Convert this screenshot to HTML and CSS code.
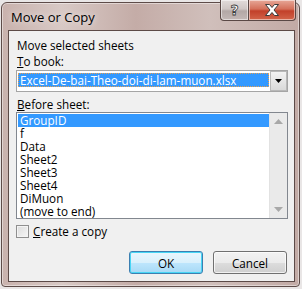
FILE: index.html
```html
<!DOCTYPE html>
<html>
<head>
<meta charset="utf-8">
<link rel="stylesheet" href="styles.css">
</head>
<body>
<div class="window">
  <div class="titlebar">
    <span class="title">Move or Copy</span>
    <div class="caption-buttons">
      <div class="cbtn help"><span class="qmark">?</span></div>
      <div class="cbtn close">
        <svg width="20" height="14" viewBox="0 0 20 14"><path d="M3.5 1.5h4l2.5 3 2.5-3h4l-4.5 5.5 4.5 5.5h-4l-2.5-3-2.5 3h-4l4.5-5.5z" fill="#fff" stroke="#3a3a3a" stroke-width="1" stroke-linejoin="round"/></svg>
      </div>
    </div>
  </div>
  <div class="client">
    <div class="label">Move selected sheets</div>
    <div class="label"><u>T</u>o book:</div>
    <div class="combo">
      <div class="combo-value"><span class="focus">Excel-De-bai-Theo-doi-di-lam-muon.xlsx</span></div>
      <div class="combo-btn"><svg width="7" height="4" viewBox="0 0 7 4"><path d="M0 0h7L3.5 4z" fill="#000"/></svg></div>
    </div>
    <div class="label label-gap"><u>B</u>efore sheet:</div>
    <div class="listbox">
      <div class="items">
        <div class="item selected">GroupID</div>
        <div class="item">f</div>
        <div class="item">Data</div>
        <div class="item">Sheet2</div>
        <div class="item">Sheet3</div>
        <div class="item">Sheet4</div>
        <div class="item">DiMuon</div>
        <div class="item">(move to end)</div>
      </div>
      <div class="scrollbar">
        <svg width="9" height="5" viewBox="0 0 9 5"><path d="M4.5 0L9 5H0z" fill="#a8a8a8"/></svg>
        <svg width="9" height="5" viewBox="0 0 9 5"><path d="M0 0h9L4.5 5z" fill="#a8a8a8"/></svg>
      </div>
    </div>
    <div class="check-row">
      <span class="checkbox"></span>
      <span class="check-label"><u>C</u>reate a copy</span>
    </div>
    <div class="buttons">
      <div class="btn default">OK</div>
      <div class="btn">Cancel</div>
    </div>
  </div>
</div>
</body>
</html>
```
FILE: styles.css
```css
html, body {
  margin: 0;
  padding: 0;
}
body {
  width: 302px;
  height: 289px;
  background: #e9e6e6;
  font-family: "Open Sans", "Noto Sans", sans-serif;
  font-size: 11.7px;
  color: #000;
  overflow: hidden;
  position: relative;
}
.window {
  position: absolute;
  left: 1px;
  top: 2px;
  width: 297px;
  height: 283px;
  border: 1px solid #5e4c49;
  border-radius: 6px 6px 4px 4px;
  background: linear-gradient(90deg, #c9b2ad 0%, #d8c9c5 20%, #c4aca7 45%, #d0bfbb 70%, #c2aaa5 100%);
  display: flex;
  flex-direction: column;
  box-shadow: inset 0 0 0 1px rgba(255,255,255,0.45);
}
.titlebar {
  height: 27px;
  display: flex;
  align-items: flex-start;
  justify-content: space-between;
  position: relative;
}
.title {
  font-family: "Open Sans", "Noto Sans", sans-serif;
  font-size: 13px;
  margin: 5px 0 0 9px;
  color: #000;
  text-shadow: 0 0 6px rgba(255,255,255,0.8);
}
.caption-buttons {
  position: absolute;
  top: -3px;
  right: 3px;
  display: flex;
}
.cbtn {
  height: 20px;
  border: 1px solid #5a4845;
  border-top: none;
  display: flex;
  align-items: center;
  justify-content: center;
  box-shadow: inset 0 0 0 1px rgba(255,255,255,0.5);
}
.help {
  width: 27px;
  border-radius: 0 0 0 4px;
  border-right: none;
  background: linear-gradient(180deg, #e2dcdb 0%, #cfc6c4 45%, #b3a8a6 55%, #c3b8b6 100%);
}
.close {
  width: 46px;
  border-radius: 0 0 4px 0;
  background: linear-gradient(180deg, #e7a898 0%, #d4705a 45%, #c2402a 55%, #d2644a 100%);
}
.qmark {
  font-family: "DejaVu Sans", sans-serif;
  font-weight: bold;
  font-size: 14px;
  color: #fff;
  -webkit-text-stroke: 0.8px #3a3a3a;
  line-height: 14px;
}
.client {
  margin: 0 4px 4px 6px;
  flex: 1;
  background: #f0f0f0;
  border: 1px solid #5c4a47;
  padding: 6px 7px 0 7px;
  display: flex;
  flex-direction: column;
}
.label {
  height: 16px;
  line-height: 16px;
  padding-left: 1px;
  white-space: nowrap;
}
.label-gap {
  margin-top: 4px;
}
.combo {
  margin-top: 1px;
  height: 20px;
  width: 270px;
  border: 1px solid #a5a5a5;
  background: #fff;
  display: flex;
  padding: 0;
}
.combo-value {
  flex: 1;
  padding: 2px 1px 2px 1px;
  display: flex;
}
.focus {
  flex: 1;
  background: #3399ff;
  color: #fff;
  line-height: 14px;
  height: 14px;
  padding-left: 2px;
  outline: 1px dotted #e8a050;
  outline-offset: -1px;
  white-space: nowrap;
  overflow: hidden;
}
.combo-btn {
  width: 15px;
  border: 1px solid #b8b8b8;
  background: linear-gradient(180deg, #f2f2f2 0%, #e6e6e6 50%, #d9d9d9 100%);
  display: flex;
  align-items: center;
  justify-content: center;
}
.listbox {
  width: 270px;
  height: 105px;
  border: 1px solid #82878f;
  background: #fff;
  display: flex;
}
.items {
  flex: 1;
  padding: 1px 0 0 1px;
}
.item {
  height: 13px;
  line-height: 13px;
  padding-left: 2px;
  white-space: nowrap;
}
.item.selected {
  background: #3399ff;
  color: #fff;
}
.scrollbar {
  width: 17px;
  background: #eaeaea;
  border-left: 1px solid #e2e2e2;
  display: flex;
  flex-direction: column;
  align-items: center;
  justify-content: space-between;
  padding: 6px 0 6px 0;
}
.check-row {
  margin-top: 6px;
  display: flex;
  align-items: center;
  height: 13px;
}
.checkbox {
  width: 11px;
  height: 11px;
  border: 1px solid #8f8f8f;
  background: linear-gradient(135deg, #dcdcdc 0%, #f6f6f6 100%);
  box-shadow: inset 0 0 0 1px #f4f4f4;
}
.check-label {
  margin-left: 4px;
  line-height: 13px;
}
.buttons {
  margin-top: 13px;
  display: flex;
  justify-content: flex-end;
  gap: 10px;
  padding-right: 0;
}
.btn {
  width: 72px;
  height: 21px;
  border: 1px solid #707070;
  border-radius: 3px;
  background: linear-gradient(180deg, #f2f2f2 0%, #ebebeb 50%, #dddddd 51%, #cfcfcf 100%);
  display: flex;
  align-items: center;
  justify-content: center;
  box-shadow: inset 0 0 0 1px rgba(255,255,255,0.7);
}
.btn.default {
  border-color: #3c7fb1;
  background: linear-gradient(180deg, #eaf6fd 0%, #d9f0fc 50%, #bee6fd 51%, #a7d9f5 100%);
  box-shadow: inset 0 0 0 1px #48d6f5;
}
u {
  text-decoration: underline;
  text-underline-offset: 1px;
}
```
